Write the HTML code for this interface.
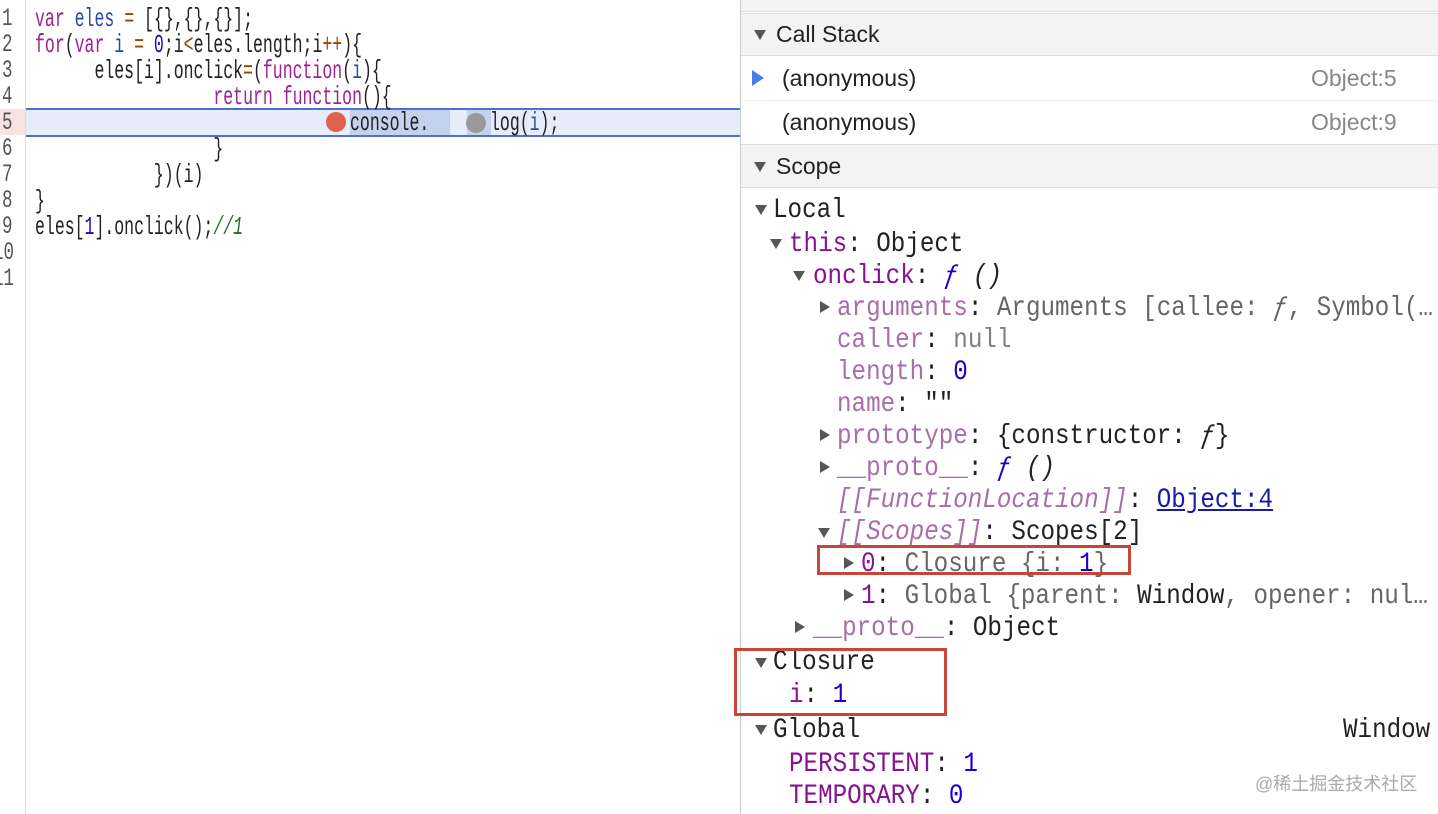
<!DOCTYPE html>
<html><head><meta charset="utf-8"><style>
*{margin:0;padding:0;box-sizing:border-box}
body{width:1438px;height:814px;background:#fff;position:relative;overflow:hidden;font-family:"Liberation Sans",sans-serif}
.a{position:absolute;white-space:pre}
.cm{font-family:"Liberation Mono",monospace;font-size:26px;line-height:26px;transform:scaleX(0.635);transform-origin:0 50%;color:#222}
.ln{font-family:"Liberation Mono",monospace;font-size:25px;line-height:26px;color:#555;transform:scaleX(0.7);transform-origin:0 50%}
.rm{font-family:"Liberation Mono",monospace;font-size:28px;line-height:32px;transform:scaleX(0.865);transform-origin:0 50%;color:#222;margin-top:2px}
.k{color:#9b2393}.v{color:#2a4aa0}.o{color:#994500}.n{color:#1c00cf}.c{color:#236e25;font-style:italic}
.p{color:#881391}.pl{color:#a86ea8}.g{color:#666}.nu{color:#808080}.b{color:#1c00cf}.lk{color:#1a1aa6;text-decoration:underline}
.it{font-style:italic}
.t{position:absolute;width:0;height:0;border-left:6px solid transparent;border-right:6px solid transparent;border-top:10px solid #555}
.r{position:absolute;width:0;height:0;border-top:6px solid transparent;border-bottom:6px solid transparent;border-left:10px solid #555}
.hd{position:absolute;left:741px;right:0;background:#f3f3f3;border-top:1px solid #ddd;border-bottom:1px solid #ddd}
.sn{font-size:23px;color:#222}
</style></head><body>
<!-- left -->
<div class="a" style="left:25px;top:0;width:1px;height:814px;background:#ddd"></div>
<div class="a" style="left:0;top:109px;width:25px;height:26px;background:#f8e3e0"></div>
<div class="a" style="left:26px;top:108px;width:714px;height:29px;background:#e6ecfa;border-top:2px solid #4a72cc;border-bottom:2px solid #4a72cc"></div>
<div class="a" style="left:350px;top:110px;width:100px;height:25px;background:#c5d2ee"></div>
<div class="a" style="left:467px;top:110px;width:24px;height:25px;background:#c5d2ee"></div>
<div class="a" style="left:326px;top:112px;width:20px;height:20px;border-radius:50%;background:#e0614c"></div>
<div class="a" style="left:466px;top:113px;width:20px;height:20px;border-radius:50%;background:#999"></div>
<div class="a ln" style="left:2px;top:6px">1
2
3
4
5
6
7
8
9</div>
<div class="a ln" style="left:-7px;top:240px">10
11</div>
<div class="a cm" style="left:35px;top:6px"><span class="k">var</span> <span class="v">eles</span> <span class="o">=</span> [{},{},{}];
<span class="k">for</span>(<span class="k">var</span> <span class="v">i</span> <span class="o">=</span> <span class="n">0</span>;i<span class="o">&lt;</span>eles.length;i<span class="o">++</span>){
      eles[i].onclick<span class="o">=</span>(<span class="k">function</span>(<span class="v">i</span>){
                  <span class="k">return</span> <span class="k">function</span>(){</div>
<div class="a cm" style="left:350px;top:110px">console.</div>
<div class="a cm" style="left:490px;top:110px">log(<span class="v">i</span>);</div>
<div class="a cm" style="left:35px;top:136px">                  }
            })(i)
}
eles[<span class="n">1</span>].onclick();<span class="c">//1</span></div>
<!-- right -->
<div class="a" style="left:740px;top:0;width:1px;height:814px;background:#ccc"></div>
<div class="a" style="left:741px;top:0;right:0;height:12px;background:#f3f3f3;border-bottom:1px solid #ddd"></div>
<div class="hd" style="top:13px;height:43px"></div>
<div class="t" style="left:754px;top:30px"></div>
<div class="a sn" style="left:776px;top:21px">Call Stack</div>
<div class="a" style="left:752px;top:70px;width:0;height:0;border-top:8px solid transparent;border-bottom:8px solid transparent;border-left:12px solid #4a7ce8"></div>
<div class="a sn" style="left:782px;top:65px">(anonymous)</div>
<div class="a sn" style="left:1311px;top:65px;color:#888">Object:5</div>
<div class="a" style="left:741px;top:100px;right:0;height:1px;background:#eee"></div>
<div class="a sn" style="left:782px;top:109px">(anonymous)</div>
<div class="a sn" style="left:1311px;top:109px;color:#888">Object:9</div>
<div class="hd" style="top:144px;height:44px"></div>
<div class="t" style="left:754px;top:162px"></div>
<div class="a sn" style="left:776px;top:153px">Scope</div>

<div class="t" style="left:755px;top:205px"></div><div class="a rm" style="left:773px;top:193px">Local</div>
<div class="t" style="left:770px;top:239px"></div><div class="a rm" style="left:789px;top:227px"><span class="p">this</span>: Object</div>
<div class="t" style="left:793px;top:271px"></div><div class="a rm" style="left:813px;top:259px"><span class="p">onclick</span>: <span class="it b">ƒ</span> <span class="it">()</span></div>
<div class="r" style="left:820px;top:301px"></div><div class="a rm" style="left:837px;top:291px"><span class="pl">arguments</span>: <span class="g">Arguments [callee: <span class="it">ƒ</span>, Symbol(…</span></div>
<div class="a rm" style="left:837px;top:323px"><span class="pl">caller</span>: <span class="nu">null</span></div>
<div class="a rm" style="left:837px;top:355px"><span class="pl">length</span>: <span class="b">0</span></div>
<div class="a rm" style="left:837px;top:387px"><span class="pl">name</span>: ""</div>
<div class="r" style="left:820px;top:429px"></div><div class="a rm" style="left:837px;top:419px"><span class="pl">prototype</span>: {constructor: <span class="it">ƒ</span>}</div>
<div class="r" style="left:820px;top:461px"></div><div class="a rm" style="left:837px;top:451px"><span class="pl">__proto__</span>: <span class="it b">ƒ</span> <span class="it">()</span></div>
<div class="a rm" style="left:837px;top:483px"><span class="pl it">[[FunctionLocation]]</span>: <span class="lk">Object:4</span></div>
<div class="t" style="left:818px;top:528px"></div><div class="a rm" style="left:837px;top:515px"><span class="pl it">[[Scopes]]</span>: Scopes[2]</div>
<div class="r" style="left:844px;top:557px"></div><div class="a rm" style="left:861px;top:547px"><span class="p">0</span>: <span class="g">Closure {i: <span class="b">1</span>}</span></div>
<div class="r" style="left:844px;top:589px"></div><div class="a rm" style="left:861px;top:579px"><span class="p">1</span>: <span class="g">Global {parent: <span style="color:#222">Window</span>, opener: nul…</span></div>
<div class="r" style="left:795px;top:621px"></div><div class="a rm" style="left:813px;top:611px"><span class="pl">__proto__</span>: Object</div>
<div class="t" style="left:755px;top:658px"></div><div class="a rm" style="left:773px;top:645px">Closure</div>
<div class="a rm" style="left:789px;top:678px"><span class="p">i</span>: <span class="b">1</span></div>
<div class="t" style="left:755px;top:725px"></div><div class="a rm" style="left:773px;top:713px">Global</div>
<div class="a rm" style="left:1343px;top:713px">Window</div>
<div class="a rm" style="left:789px;top:747px"><span class="p">PERSISTENT</span>: <span class="b">1</span></div>
<div class="a rm" style="left:789px;top:779px"><span class="p">TEMPORARY</span>: <span class="b">0</span></div>
<div class="a" style="left:817px;top:545px;width:314px;height:30px;border:3px solid #c9453a"></div>
<div class="a" style="left:734px;top:648px;width:213px;height:68px;border:3px solid #c9453a"></div>
<div class="a" style="left:1255px;top:770px;font-size:18px;color:#aaa;font-family:'Liberation Sans','Noto Sans CJK SC',sans-serif">@稀土掘金技术社区</div>
</body></html>
